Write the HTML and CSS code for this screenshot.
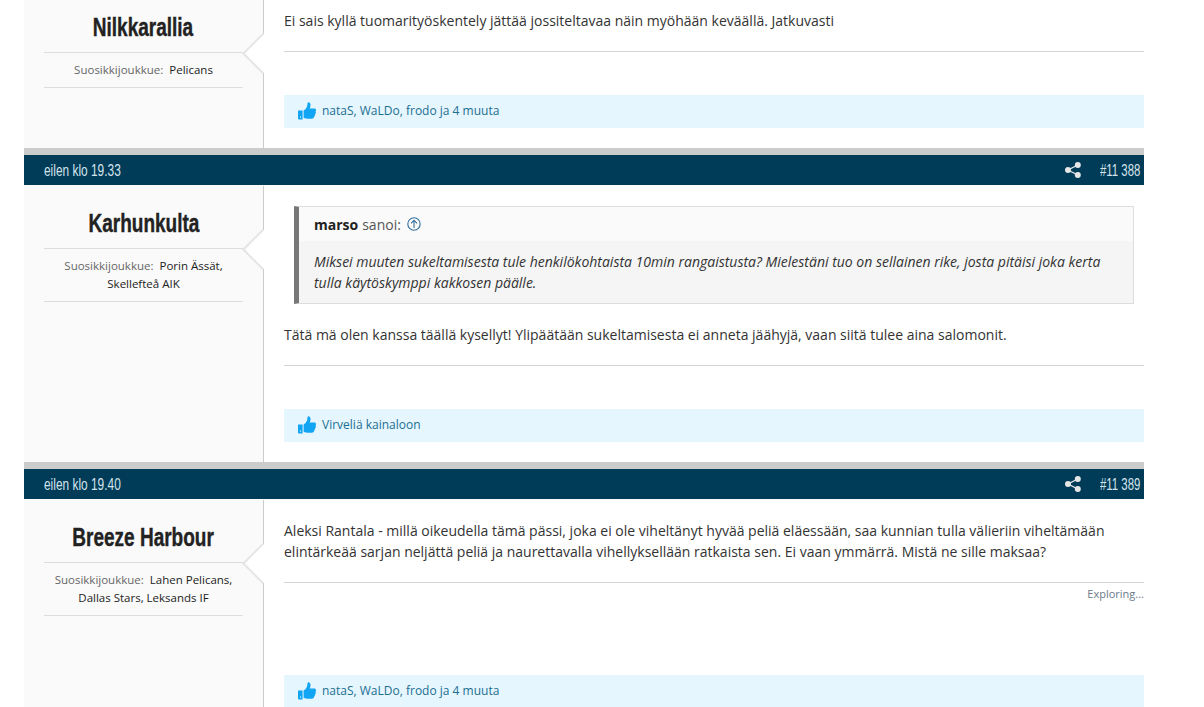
FILE: index.html
```html
<!DOCTYPE html>
<html lang="fi">
<head>
<meta charset="utf-8">
<title>Keskustelu</title>
<link rel="stylesheet" href="styles.css">
</head>
<body>
<svg class="defs" width="0" height="0" aria-hidden="true">
  <symbol id="thumb" viewBox="0 0 18 18"><path fill-rule="evenodd" d="M0 8.500h4.600V17.500H1a1 1 0 0 1-1-1zM2 14.500v1.300h1v-1.300zM5.600 8.400c1.500-.8 3-2.600 3.500-4.200.3-1 .2-2.200.4-3 .2-.7 1-1.100 1.700-.8 1.500.6 1.500 2.600 1.100 4.200l-.5 1.900h4.300c1.300 0 2.100.9 2 2-.1.500-.3.900-.6 1.200.4.400.5 1.200.2 1.800-.2.400-.5.700-.8.900.2.600.1 1.300-.3 1.800-.2.200-.4.400-.7.500.1.600-.1 1.200-.5 1.600-.4.300-.9.500-1.500.500h-3.700c-1.800 0-3.300-.4-4.600-1z"/></symbol>
  <symbol id="share" viewBox="0 0 16 16"><circle cx="12.800" cy="3" r="3"/><circle cx="3" cy="8" r="3"/><circle cx="12.800" cy="13" r="3"/><path class="share-lines" d="M12.800 3 3 8l9.800 5"/></symbol>
</svg>
<main class="thread">
  <article class="post post-first">
    <div class="post-body">
      <aside class="author">
        <h2 class="author-name"><span class="squeeze">Nilkkarallia</span></h2>
        <p class="author-info"><span class="label">Suosikkijoukkue:</span>Pelicans</p>
      </aside>
      <div class="content">
        <p class="message">Ei sais kyllä tuomarityöskentely jättää jossiteltavaa näin myöhään keväällä. Jatkuvasti</p>
        <hr class="rule">
        <div class="likes"><svg class="thumb"><use href="#thumb"/></svg><a>nataS, WaLDo, frodo ja 4 muuta</a></div>
      </div>
    </div>
  </article>

  <article class="post">
    <header class="post-head">
      <time class="squeeze-left">eilen klo 19.33</time>
      <div class="post-tools"><svg class="share"><use href="#share"/></svg><span class="post-no">#11 388</span></div>
    </header>
    <div class="post-body">
      <aside class="author">
        <h2 class="author-name"><span class="squeeze">Karhunkulta</span></h2>
        <p class="author-info"><span class="label">Suosikkijoukkue:</span>Porin Ässät, Skellefteå AIK</p>
      </aside>
      <div class="content">
        <blockquote class="quote">
          <div class="quote-head"><b>marso</b> sanoi:
            <svg class="quote-up" viewBox="0 0 14 14"><circle cx="7" cy="7" r="6.200"/><path d="M7 11V3.600M4 6.400l3-3 3 3"/></svg>
          </div>
          <p class="quote-text">Miksei muuten sukeltamisesta tule henkilökohtaista 10min rangaistusta? Mielestäni tuo on sellainen rike, josta pitäisi joka kerta tulla käytöskymppi kakkosen päälle.</p>
        </blockquote>
        <p class="message">Tätä mä olen kanssa täällä kysellyt! Ylipäätään sukeltamisesta ei anneta jäähyjä, vaan siitä tulee aina salomonit.</p>
        <hr class="rule">
        <div class="likes"><svg class="thumb"><use href="#thumb"/></svg><a>Virveliä kainaloon</a></div>
      </div>
    </div>
  </article>

  <article class="post">
    <header class="post-head">
      <time class="squeeze-left">eilen klo 19.40</time>
      <div class="post-tools"><svg class="share"><use href="#share"/></svg><span class="post-no">#11 389</span></div>
    </header>
    <div class="post-body">
      <aside class="author">
        <h2 class="author-name"><span class="squeeze">Breeze Harbour</span></h2>
        <p class="author-info"><span class="label">Suosikkijoukkue:</span>Lahen Pelicans, Dallas Stars, Leksands IF</p>
      </aside>
      <div class="content">
        <p class="message">Aleksi Rantala - millä oikeudella tämä pässi, joka ei ole viheltänyt hyvää peliä eläessään, saa kunnian tulla välieriin viheltämään elintärkeää sarjan neljättä peliä ja naurettavalla vihellyksellään ratkaista sen. Ei vaan ymmärrä. Mistä ne sille maksaa?</p>
        <hr class="rule">
        <div class="exploring">Exploring...</div>
        <div class="likes likes-spaced"><svg class="thumb"><use href="#thumb"/></svg><a>nataS, WaLDo, frodo ja 4 muuta</a></div>
      </div>
    </div>
  </article>
</main>
</body>
</html>
```
FILE: styles.css
```css
* { box-sizing: border-box; }
html, body { height: 707px; overflow: hidden; }
body {
  margin: 0;
  background: #fff;
  color: #333;
  font-family: "Open Sans", sans-serif;
  font-size: 14px;
  line-height: 21px;
}
.defs { display: block; height: 0; }
.thread { width: 1120px; margin: -10px 0 0 24px; }
.post { border-top: 7px solid #ccc; }
.post-first { border-top: 0; }
.post-head {
  height: 31px;
  padding: 0 4px 0 20px;
  display: flex;
  align-items: center;
  justify-content: space-between;
  background: #003b57;
  border-bottom: 1px solid #fafafa;
  color: #d3e3ec;
  font-family: "Liberation Sans", sans-serif;
  font-size: 17px;
}
.squeeze-left {
  display: inline-block;
  white-space: nowrap;
  transform: scaleX(.7);
  transform-origin: left center;
}
.post-tools { display: flex; align-items: center; }
.share { width: 16px; height: 16px; fill: #e6e6e6; margin-right: 19px; }
.share-lines { fill: none; stroke: #e6e6e6; stroke-width: 1.400; }
.post-no {
  display: inline-block;
  width: 40px;
  white-space: nowrap;
  transform: scaleX(.67);
  transform-origin: left center;
}
.post-body { display: flex; }
.author {
  position: relative;
  flex: 0 0 240px;
  padding: 0 20px;
  background: #fafafa;
  border-right: 1px solid #ccc;
  text-align: center;
}
.author::after {
  content: "";
  position: absolute;
  top: 49px;
  right: -14px;
  width: 27px;
  height: 27px;
  background: #fff;
  border: solid #e5e5e5;
  border-width: 0 0 2px 2px;
  transform: rotate(45deg);
}
.author-name {
  margin: 0;
  height: 63px;
  padding-top: 19px;
  font-family: "Liberation Sans", sans-serif;
  font-size: 25px;
  line-height: 36px;
  font-weight: 700;
  color: #222;
  border-bottom: 1px solid #ddd;
}
.squeeze {
  display: inline-block;
  white-space: nowrap;
  transform: scaleX(.76);
  -webkit-text-stroke: .4px #222;
}
.author-info {
  margin: 0;
  padding: 8px 0 8px;
  font-size: 11.5px;
  line-height: 18px;
  color: #222;
  border-bottom: 1px solid #ddd;
}
.label { color: #666; margin-right: 6px; }
.content { flex: 1; min-width: 0; padding: 20px 0 20px 20px; }
.message { margin: 0; color: #333; }
.rule { margin: 20px 0 0; border: 0; border-top: 1px solid #d5d5d5; height: 1px; }
.likes {
  display: flex;
  align-items: center;
  height: 33px;
  margin-top: 43px;
  padding: 0 0 2px 14px;
  background: #e5f6ff;
  font-size: 12px;
  color: #1c6f90;
}
.likes-spaced { margin-top: 71px; }
.thumb { width: 18px; height: 18px; margin-right: 6px; fill: #12a5f4; }
.exploring { text-align: right; font-size: 11px; line-height: 21px; color: #6c7a89; }
.quote {
  margin: 0 10px 20px;
  background: #f5f5f5;
  border: 1px solid #ddd;
  border-left: 5px solid #777;
}
.quote-head {
  height: 34px;
  padding: 0 15px;
  display: flex;
  align-items: center;
  gap: 4px;
  background: #fafafa;
  color: #555;
}
.quote-head b { color: #222; }
.quote-up { width: 14px; height: 14px; margin-left: 2px; fill: none; stroke: #34709e; stroke-width: 1.100; }
.quote-text { margin: 0; padding: 10px 15px 10px; font-style: italic; color: #333; }
```
